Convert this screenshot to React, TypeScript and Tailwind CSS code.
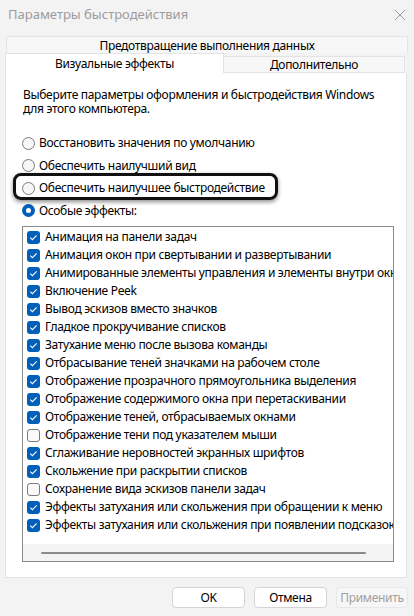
import React from "react";

const items: [string, boolean][] = [
  ["Анимация на панели задач", true],
  ["Анимация окон при свертывании и развертывании", true],
  ["Анимированные элементы управления и элементы внутри окна", true],
  ["Включение Peek", true],
  ["Вывод эскизов вместо значков", true],
  ["Гладкое прокручивание списков", true],
  ["Затухание меню после вызова команды", true],
  ["Отбрасывание теней значками на рабочем столе", true],
  ["Отображение прозрачного прямоугольника выделения", true],
  ["Отображение содержимого окна при перетаскивании", true],
  ["Отображение теней, отбрасываемых окнами", true],
  ["Отображение тени под указателем мыши", false],
  ["Сглаживание неровностей экранных шрифтов", true],
  ["Скольжение при раскрытии списков", true],
  ["Сохранение вида эскизов панели задач", false],
  ["Эффекты затухания или скольжения при обращении к меню", true],
  ["Эффекты затухания или скольжения при появлении подсказок", true],
];

const radios = [
  "Восстановить значения по умолчанию",
  "Обеспечить наилучший вид",
  "Обеспечить наилучшее быстродействие",
  "Особые эффекты:",
];

function Check({ on }: { on: boolean }) {
  if (!on)
    return (
      <span className="w-[13px] h-[13px] shrink-0 rounded-[3px] border border-[#7a7a7a] bg-[#fafafa]" />
    );
  return (
    <svg width="13" height="13" viewBox="0 0 13 13" className="shrink-0">
      <rect x="0" y="0" width="13" height="13" rx="3" fill="#005fb8" />
      <path d="M3.3 6.7 L5.4 8.7 L9.7 4.4" stroke="#fff" strokeWidth="1.1" fill="none" />
    </svg>
  );
}

function Radio({ on }: { on: boolean }) {
  if (on)
    return (
      <span className="w-[13px] h-[13px] shrink-0 rounded-full bg-[#005fb8] flex items-center justify-center">
        <span className="w-[5px] h-[5px] rounded-full bg-white" />
      </span>
    );
  return <span className="w-[13px] h-[13px] shrink-0 rounded-full border border-[#7a7a7a] bg-[#f7f7f7]" />;
}

export default function App() {
  return (
    <div
      className="relative w-[414px] h-[616px] bg-[#f3f3f3] overflow-hidden text-[12px] tracking-[-0.32px] text-black"
      style={{ fontFamily: '"Noto Sans", "Open Sans", sans-serif' }}
    >
      {/* title bar */}
      <div className="h-[30px] flex items-center justify-between pl-[8px] pr-[8px]">
        <span className="text-[13px] tracking-normal text-[#9c9c9c]">Параметры быстродействия</span>
        <svg width="12" height="12" viewBox="0 0 12 12">
          <path d="M1 1 L11 11 M11 1 L1 11" stroke="#9c9c9c" strokeWidth="1" />
        </svg>
      </div>

      {/* tabs */}
      <div className="pt-[6px] pl-[5px]">
        <div className="ml-[1px] w-[402px] h-[17px] border border-b-0 border-[#e3e3e3] bg-[#f7f7f7] flex items-center justify-center leading-none pt-[1px]">
          Предотвращение выполнения данных
        </div>
        <div className="flex items-end h-[20px]">
          <div className="w-[219px] h-[20px] bg-white border border-b-0 border-[#e3e3e3] flex items-center justify-center leading-none">
            Визуальные эффекты
          </div>
          <div className="w-[181px] h-[17px] bg-[#f7f7f7] border border-l-0 border-[#e3e3e3] flex items-center justify-center leading-none pt-[1px]">
            Дополнительно
          </div>
        </div>
      </div>

      {/* panel */}
      <div className="ml-[5px] w-[402px] h-[505px] bg-white border border-t-0 border-[#e3e3e3] pl-[16px] pr-[14px]">
        <div className="pt-[15px] leading-[14px] pl-[1px]">
          Выберите параметры оформления и быстродействия Windows
          <br />
          для этого компьютера.
        </div>
        <div className="mt-[16px] flex flex-col">
          {radios.map((r, i) => (
            <div key={r} className="h-[22.5px] flex items-center gap-[4px]">
              <Radio on={i === 3} />
              <span>{r}</span>
            </div>
          ))}
        </div>
        <div className="mt-[4px] w-[372px] h-[336px] border border-[#8a8a8a] flex flex-col overflow-hidden">
          <div className="pt-[1px] flex-1 overflow-hidden">
            {items.map(([t, on]) => (
              <div key={t} className="h-[18px] flex items-center gap-[5px] pl-[4px] whitespace-nowrap">
                <Check on={on} />
                <span>{t}</span>
              </div>
            ))}
          </div>
          <div className="h-[17px] bg-[#f3f3f3] flex items-center pl-[18px]">
            <div className="w-[325px] h-[2px] rounded-full bg-[#8a8a8a]" />
          </div>
        </div>
      </div>

      {/* buttons */}
      <div className="mt-[9px] flex justify-end gap-[9px] pr-[6px]">
        <button className="w-[73px] h-[21px] rounded-[4px] bg-white border border-[#d4d4d4] leading-none">
          OK
        </button>
        <button className="w-[73px] h-[21px] rounded-[4px] bg-white border border-[#d4d4d4] leading-none">
          Отмена
        </button>
        <button className="w-[72px] h-[21px] rounded-[4px] bg-[#f6f6f6] border border-[#e8e8e8] text-[#a0a0a0] leading-none">
          Применить
        </button>
      </div>

      {/* highlight annotation */}
      <div className="absolute left-[13px] top-[173px] w-[265px] h-[27px] rounded-[8px] border-[3px] border-[#111] shadow-[0_2px_4px_rgba(0,0,0,0.45)]" />
    </div>
  );
}
